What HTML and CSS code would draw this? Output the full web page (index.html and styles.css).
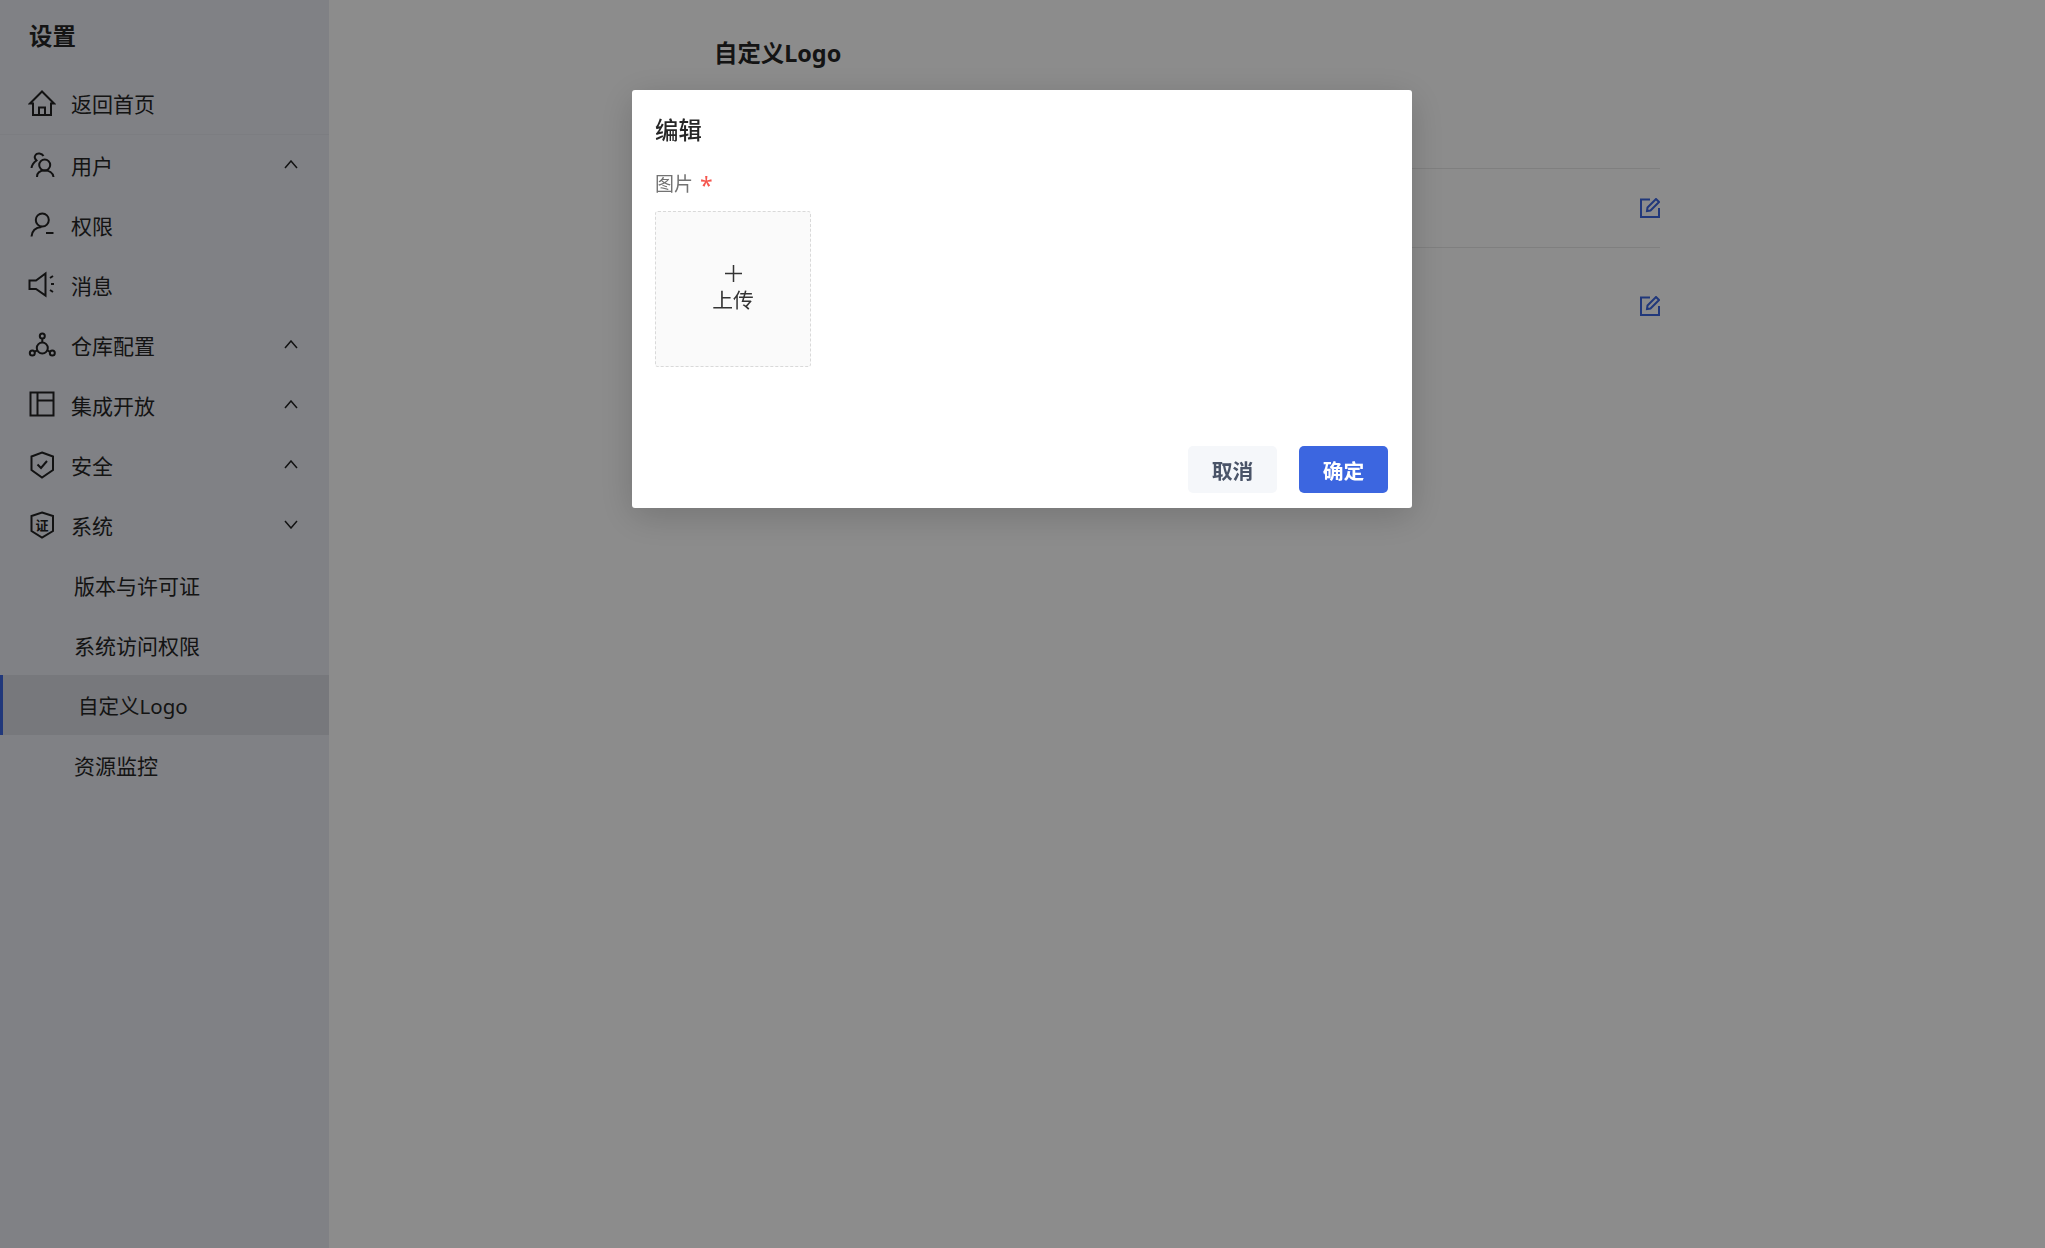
FILE: index.html
```html
<!DOCTYPE html>
<html lang="zh-CN">
<head>
    <meta charset="UTF-8">
    <meta name="viewport" content="width=device-width, initial-scale=1.0">
    <title>自定义Logo</title>
    <link rel="stylesheet" href="styles.css">
</head>
<body>
    <div class="layout">
        <aside class="sidebar">
            <div class="sidebar-title">设置</div>
            <a class="menu-item menu-home">
                <svg class="menu-icon" viewBox="0 0 28 28"><path d="M2 14.500 14 2.500l12 12h-3V26H5V14.500z"/><path d="M11 26v-7.500h6V26"/></svg>
                <span>返回首页</span>
            </a>
            <a class="menu-item">
                <svg class="menu-icon" viewBox="0 0 28 28"><circle cx="16.700" cy="14" r="5.500"/><path d="M9 26c0-4.500 3.500-6.500 7.700-6.500s8.300 2 8.800 6.500"/><path d="M15.500 5C14 2 9 1.500 7.500 4 6 6 7 8 8.500 9.500 6.500 11 4 13 3.500 17"/></svg>
                <span>用户</span>
                <svg class="chevron" viewBox="0 0 14 9"><path d="M1 8l6-7 6 7"/></svg>
            </a>
            <a class="menu-item">
                <svg class="menu-icon" viewBox="0 0 28 28"><circle cx="14.300" cy="9" r="6.500"/><path d="M3.500 25.500c.5-6 4.500-9 10-9.500"/><path d="M18 22h7.500"/></svg>
                <span>权限</span>
            </a>
            <a class="menu-item">
                <svg class="menu-icon" viewBox="0 0 28 28"><path d="M1.500 9.500H8l9.500-7v22L8 18H1.500z"/><path d="M22 7l3-2M23 13h3M22 19l3 2"/></svg>
                <span>消息</span>
            </a>
            <a class="menu-item">
                <svg class="menu-icon" viewBox="0 0 28 28"><circle cx="14.300" cy="5" r="2.500"/><circle cx="4.300" cy="22" r="2.500"/><circle cx="24.300" cy="22" r="2.500"/><circle cx="14.300" cy="17" r="5.500"/><path d="M14.300 7.500v4M6.500 20.800l3-1.600M22 20.800l-3-1.600"/></svg>
                <span>仓库配置</span>
                <svg class="chevron" viewBox="0 0 14 9"><path d="M1 8l6-7 6 7"/></svg>
            </a>
            <a class="menu-item">
                <svg class="menu-icon" viewBox="0 0 28 28"><path d="M2.500 1.500h23v23h-23zM9.500 1.500v23M9.500 9.500h16"/></svg>
                <span>集成开放</span>
                <svg class="chevron" viewBox="0 0 14 9"><path d="M1 8l6-7 6 7"/></svg>
            </a>
            <a class="menu-item">
                <svg class="menu-icon" viewBox="0 0 28 28"><path d="M14 1.500l11 4V19l-11 7.500L3.500 19V5.500z"/><path d="M9.500 13.500L13 17l6-7"/></svg>
                <span>安全</span>
                <svg class="chevron" viewBox="0 0 14 9"><path d="M1 8l6-7 6 7"/></svg>
            </a>
            <a class="menu-item">
                <svg class="menu-icon" viewBox="0 0 28 28"><path d="M14 1.500l11 3.500v15l-11 6.500L3.500 20V5z"/><text class="shield-text" x="14" y="18.500">证</text></svg>
                <span>系统</span>
                <svg class="chevron" viewBox="0 0 14 9"><path d="M1 1l6 7 6-7"/></svg>
            </a>
            <a class="menu-item sub-item">版本与许可证</a>
            <a class="menu-item sub-item">系统访问权限</a>
            <a class="menu-item sub-item active">自定义Logo</a>
            <a class="menu-item sub-item">资源监控</a>
        </aside>
        <main class="main">
            <h1 class="page-title">自定义Logo</h1>
            <div class="logo-row">
                <svg class="edit-icon" viewBox="0 0 20 20"><path d="M10 1.500H1V19h18v-9"/><path d="M7 13l.5-3.500L16 1l3 3-8.500 8.500z"/></svg>
            </div>
            <div class="logo-row logo-row-tall">
                <svg class="edit-icon" viewBox="0 0 20 20"><path d="M10 1.500H1V19h18v-9"/><path d="M7 13l.5-3.500L16 1l3 3-8.500 8.500z"/></svg>
            </div>
        </main>
    </div>

    <div class="overlay">
        <div class="modal">
            <div class="modal-title">编辑</div>
            <div class="field-label">图片 <span class="required">*</span></div>
            <div class="upload">
                <svg class="upload-plus" viewBox="0 0 17 17"><path d="M8.500 0v17M0 8.500h17"/></svg>
                <span>上传</span>
            </div>
            <div class="modal-footer">
                <button class="btn btn-cancel">取消</button>
                <button class="btn btn-primary">确定</button>
            </div>
        </div>
    </div>
</body>
</html>
```

FILE: styles.css
```css
* {
    box-sizing: border-box;
}
body {
    font-family: "Noto Sans", "Noto Sans CJK SC", sans-serif;
    color: #262626;
    background-color: #ffffff;
    margin: 0;
    height: 1248px;
    overflow: hidden;
}
.layout {
    display: flex;
    height: 100%;
}
.sidebar {
    width: 329px;
    flex-shrink: 0;
    background-color: #e9ebf3;
}
.sidebar-title {
    height: 73px;
    padding: 18px 0 0 29px;
    font-size: 23.400px;
    line-height: 36px;
    font-weight: 700;
}
.menu-item {
    display: flex;
    align-items: center;
    height: 60px;
    padding: 0 31px 0 28px;
    font-size: 21px;
}
.menu-home {
    height: 62px;
    padding-bottom: 2px;
    border-bottom: 1px solid #e2e4ec;
}
.menu-icon {
    width: 28px;
    height: 28px;
    margin-right: 15px;
    flex-shrink: 0;
    fill: none;
    stroke: #222222;
    stroke-width: 2;
}
.shield-text {
    font-size: 13px;
    font-weight: 700;
    text-anchor: middle;
    fill: #222222;
    stroke: none;
}
.chevron {
    width: 14px;
    height: 9px;
    margin: -1px 0 0 auto;
    fill: none;
    stroke: #222222;
    stroke-width: 1.500;
}
.sub-item {
    padding-left: 74px;
}
.sub-item.active {
    padding-left: 75px;
    border-left: 3px solid #3c66e0;
    background-color: #d9dbe2;
    font-size: 20.500px;
}
.main {
    flex: 1;
    padding: 37px 385px 0 385px;
}
.page-title {
    margin: 0 0 98px;
    font-size: 23.400px;
    line-height: 33px;
    font-weight: 700;
}
.logo-row {
    display: flex;
    align-items: center;
    justify-content: flex-end;
    height: 79px;
    border-top: 1px solid #e8e8e8;
}
.logo-row-tall {
    height: 116px;
}
.edit-icon {
    width: 20px;
    height: 20px;
    fill: none;
    stroke: #3c66e0;
    stroke-width: 2;
}
.overlay {
    position: fixed;
    inset: 0;
    background-color: rgba(0, 0, 0, 0.45);
    display: flex;
    justify-content: center;
    align-items: flex-start;
    padding: 90px 1px 0 0;
}
.modal {
    display: flex;
    flex-direction: column;
    width: 780px;
    height: 418px;
    padding: 0 24px 15px 23px;
    background-color: #ffffff;
    border-radius: 3px;
    box-shadow: 0 8px 36px rgba(0, 0, 0, 0.18);
}
.modal-title {
    margin-top: 23px;
    font-size: 23.400px;
    line-height: 34px;
    font-weight: 500;
}
.field-label {
    margin-top: 24px;
    font-size: 19px;
    line-height: 26px;
    color: #737373;
}
.required {
    color: #f5564e;
    margin-left: 2px;
    font-size: 23px;
    line-height: 0;
    vertical-align: -3px;
}
.upload {
    display: flex;
    flex-direction: column;
    align-items: center;
    justify-content: center;
    gap: 5px;
    width: 156px;
    height: 156px;
    margin-top: 14px;
    background-color: #fafafa;
    border: 1px dashed #d9d9d9;
    border-radius: 3px;
    font-size: 20.800px;
    line-height: 26px;
    color: #333333;
}
.upload-plus {
    width: 17px;
    height: 17px;
    fill: none;
    stroke: #333333;
    stroke-width: 1.500;
}
.modal-footer {
    display: flex;
    justify-content: flex-end;
    gap: 22px;
    margin-top: auto;
}
.btn {
    width: 89px;
    height: 47px;
    border: none;
    border-radius: 5px;
    font-family: inherit;
    font-size: 20.800px;
    font-weight: 700;
    cursor: pointer;
}
.btn-cancel {
    background-color: #f5f7fa;
    color: #4a5468;
}
.btn-primary {
    background-color: #3c66e0;
    color: #ffffff;
}
```
